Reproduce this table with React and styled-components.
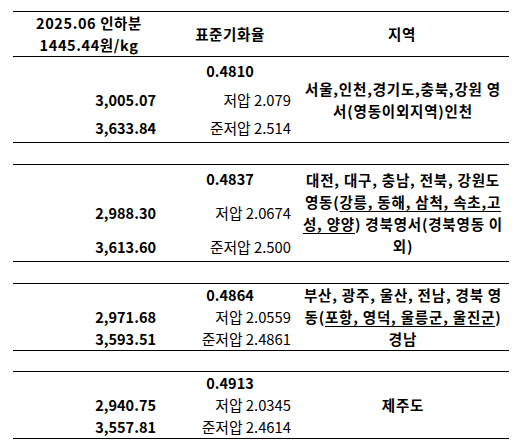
import React from "react";
import styled, { createGlobalStyle } from "styled-components";

const Global = createGlobalStyle`
  body {
    margin: 8px;
    background: #fff;
    color: #000;
    font-family: "Noto Sans CJK KR", "Noto Sans", sans-serif;
  }
`;

const Wrap = styled.div`
  padding: 3px 0 0 5px;
`;

const Table = styled.div`
  width: 496px;
  display: flex;
  flex-direction: column;
  font-size: 14.5px;
  line-height: 22px;
`;

const Row = styled.div`
  display: grid;
  grid-template-columns: 152px 130px 214px;
  min-height: ${(p) => p.$h}px;
  border-top: ${(p) => (p.$noTop ? "none" : "1px solid #000")};
  border-bottom: 1px solid #000;
  margin-top: ${(p) => p.$gap || 0}px;
`;

const HeadCell = styled.div`
  display: flex;
  flex-direction: column;
  justify-content: center;
  align-items: center;
  font-weight: 700;
  text-align: center;
  white-space: nowrap;
  letter-spacing: 0.6px;
`;

const StackCell = styled.div`
  display: flex;
  flex-direction: column;
  justify-content: space-between;
  padding: ${(p) => p.$pad || 0}px ${(p) => p.$right}px ${(p) => p.$pad || 0}px 0;
  text-align: right;
  white-space: nowrap;
`;

const Line = styled.div`
  height: 22px;
  font-weight: ${(p) => (p.$bold ? 700 : 400)};
  font-size: ${(p) => (p.$bold ? "14.5px" : "14.8px")};
  text-align: ${(p) => (p.$center ? "center" : "right")};
  ${(p) => (p.$center ? `margin-right: -4px;` : "")}
`;

const RegionCell = styled.div`
  display: flex;
  flex-direction: column;
  justify-content: center;
  align-items: center;
  text-align: center;
  white-space: nowrap;
  padding-left: 2px;
  font-weight: 700;
  letter-spacing: 0.8px;
`;

const RegionLine = styled.div`
  height: 22px;
`;

const U = styled.span`
  text-decoration: underline;
  text-decoration-thickness: 1px;
  text-underline-offset: 3px;
`;

const rows = [
  {
    h: 85,
    pad: 3,
    rate: "0.4810",
    low: "저압 2.079",
    semi: "준저압 2.514",
    a: "3,005.07",
    b: "3,633.84",
    region: [
      <>서울,인천,경기도,충북,강원 영</>,
      <>서(영동이외지역)인천</>,
    ],
  },
  {
    h: 96,
    pad: 3,
    gap: 21,
    rate: "0.4837",
    low: "저압 2.0674",
    semi: "준저압 2.500",
    a: "2,988.30",
    b: "3,613.60",
    region: [
      <>대전, 대구, 충남, 전북, 강원도</>,
      <>
        영동(<U>강릉, 동해, 삼척, 속초,고</U>
      </>,
      <>
        <U>성, 양양</U>) 경북영서(경북영동 이
      </>,
      <>외)</>,
    ],
  },
  {
    h: 66,
    pad: 0,
    gap: 21,
    rate: "0.4864",
    low: "저압 2.0559",
    semi: "준저압 2.4861",
    a: "2,971.68",
    b: "3,593.51",
    region: [
      <>부산, 광주, 울산, 전남, 경북 영</>,
      <>
        동(<U>포항, 영덕, 울릉군, 울진군</U>)
      </>,
      <>경남</>,
    ],
  },
  {
    h: 66,
    pad: 0,
    gap: 20,
    rate: "0.4913",
    low: "저압 2.0345",
    semi: "준저압 2.4614",
    a: "2,940.75",
    b: "3,557.81",
    region: [<>제주도</>],
  },
];

export default function App() {
  return (
    <>
      <Global />
      <Wrap>
        <Table>
          <Row $h={43}>
            <HeadCell>
              <div>2025.06 인하분</div>
              <div>1445.44원/kg</div>
            </HeadCell>
            <HeadCell>표준기화율</HeadCell>
            <HeadCell>지역</HeadCell>
          </Row>
          {rows.map((r, i) => (
            <Row key={i} $h={r.h} $noTop={i === 0} $gap={r.gap}>
              <StackCell $pad={r.pad} $right={9}>
                <Line />
                <Line $bold>{r.a}</Line>
                <Line $bold>{r.b}</Line>
              </StackCell>
              <StackCell $pad={r.pad} $right={4}>
                <Line $bold $center>
                  {r.rate}
                </Line>
                <Line>{r.low}</Line>
                <Line>{r.semi}</Line>
              </StackCell>
              <RegionCell>
                {r.region.map((t, j) => (
                  <RegionLine key={j}>{t}</RegionLine>
                ))}
              </RegionCell>
            </Row>
          ))}
        </Table>
      </Wrap>
    </>
  );
}
